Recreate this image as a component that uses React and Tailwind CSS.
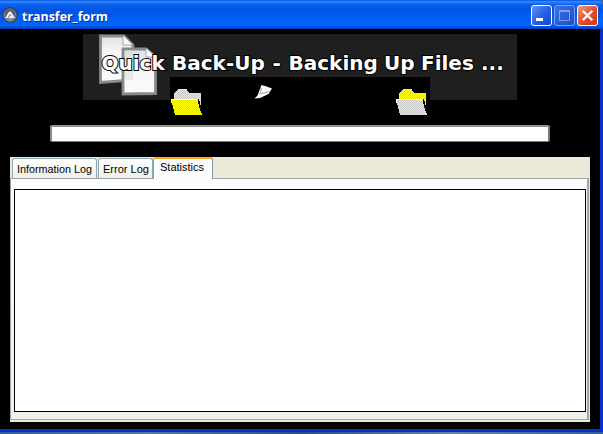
const WINDOW_FONT = "font-['Liberation_Sans',Arial,sans-serif]";

function AppIcon() {
  return (
    <svg width="16" height="16" viewBox="0 0 16 16" className="shrink-0">
      <defs>
        <radialGradient id="disc" cx="50%" cy="65%" r="60%">
          <stop offset="0" stopColor="#a9b6c8" />
          <stop offset="0.55" stopColor="#55688a" />
          <stop offset="1" stopColor="#3c424d" />
        </radialGradient>
      </defs>
      <circle cx="8" cy="8" r="7.4" fill="url(#disc)" stroke="#3a3b40" strokeWidth="1" />
      <circle cx="8" cy="8" r="6" fill="none" stroke="#858b96" strokeWidth="0.9" />
      <path d="M3.2 11 L7 4.8 Q8 3.6 9 4.8 L12.8 11 H6.8 L8.4 9 H9.4 L8 6.8 L5.4 11 Z" fill="#eef2f7" />
    </svg>
  );
}

function TitleButton({ kind }) {
  const fill = {
    min: "bg-linear-to-br from-[#5f92f4] via-[#2a62e6] to-[#1545c8] border-white",
    max: "bg-linear-to-br from-[#3a72e8] to-[#1c4cca] border-[#7f9ff0]",
    close: "bg-linear-to-br from-[#f09a80] via-[#e0512b] to-[#c63a14] border-white",
  }[kind];
  return (
    <div className={`h-[21px] w-[21px] rounded-[3px] border ${fill}`}>
      <svg width="19" height="19" viewBox="0 0 19 19" className="block">
        {kind === "min" && <rect x="4" y="12" width="7" height="3" fill="#fff" />}
        {kind === "max" && (
          <path d="M4.5 5V14.5H14.5V5M4 5.5H15M4 4.5H15" fill="none" stroke="#7e9bec" />
        )}
        {kind === "close" && (
          <path d="M4.7 4.7L14.3 14.3M14.3 4.7L4.7 14.3" stroke="#fff" strokeWidth="2.3" />
        )}
      </svg>
    </div>
  );
}

function Folder() {
  return (
    <svg width="32" height="28" viewBox="0 0 32 28" shapeRendering="crispEdges" className="block">
      <defs>
        <pattern id="dither" width="2" height="2" patternUnits="userSpaceOnUse">
          <rect width="2" height="2" fill="#ffff00" />
          <rect width="1" height="1" fill="#cccccc" />
          <rect x="1" y="1" width="1" height="1" fill="#cccccc" />
        </pattern>
        <pattern id="ditherFront" x="1" width="2" height="2" patternUnits="userSpaceOnUse">
          <rect width="2" height="2" fill="#ffff00" />
          <rect width="1" height="1" fill="#cccccc" />
          <rect x="1" y="1" width="1" height="1" fill="#cccccc" />
        </pattern>
      </defs>
      <path d="M4 10V4L8 0H15L18 4H30V18L28 10Z" fill="url(#dither)" />
      <path d="M3.5 10V4.5L7 1M17 4.5H30" fill="none" stroke="#dcdcd4" />
      <path d="M7 0.5H15L17 3.5" fill="none" stroke="#e6e6de" />
      <path d="M0 10H27L31 26H4L2 18Z" fill="url(#ditherFront)" />
      <path d="M0.5 14V10.5H27" fill="none" stroke="#fff" />
      <path d="M27.5 10V13L30 22" fill="none" stroke="#111" />
    </svg>
  );
}

function FlyingSheet() {
  return (
    <svg width="19" height="16" viewBox="0 0 19 16" className="block">
      <path d="M7.5 1L11 2L18 4.5L14.5 10L6 14L0.5 14.5L3.5 11.5Z" fill="#fff" />
      <path d="M5 9.5L10 9L15 7.5M7.5 4L6.5 8" stroke="#555" strokeWidth="0.6" fill="none" />
    </svg>
  );
}

function Documents() {
  return (
    <svg width="62" height="64" viewBox="0 0 62 64" className="block">
      <defs>
        <linearGradient id="paper" x1="0" y1="0" x2="0" y2="1">
          <stop offset="0" stopColor="#dfe0e1" />
          <stop offset="0.35" stopColor="#f6f6f6" />
          <stop offset="1" stopColor="#fafafa" />
        </linearGradient>
      </defs>
      <path d="M2.5 2H26L35 11V46L2.5 48.5Z" fill="url(#paper)" stroke="#858b8e" strokeWidth="2.8" />
      <path d="M25 1L35 11H25Z" fill="#f7f7f7" stroke="#888e91" strokeWidth="0.7" />
      <path d="M25 15H48L57.5 23V59.5L25 60Z" fill="url(#paper)" stroke="#858b8e" strokeWidth="2.8" />
      <path d="M27 16H35V46H27Z" fill="#d5d8da" opacity="0.5" />
      <path d="M48 14L58 23H48Z" fill="#f9f9f9" stroke="#888e91" strokeWidth="0.7" />
    </svg>
  );
}

function Banner() {
  return (
    <div className="relative ml-[83px] h-[90px] w-[434px]">
      <div className="h-[66px] bg-[#1f1f1f] pl-[15px]">
        <Documents />
      </div>
      <div className="absolute left-[87px] top-[43px] h-[47px] w-[260px] bg-black">
        <div className="absolute left-[1px] top-[12px]"><Folder /></div>
        <div className="absolute left-[84px] top-[7px]"><FlyingSheet /></div>
        <div className="absolute left-[226px] top-[12px]"><Folder /></div>
      </div>
      <svg width="434" height="66" className="absolute left-0 top-0">
        <text y="36"
          className="fill-white stroke-black font-['DejaVu_Sans',Verdana,sans-serif] text-[20px] font-bold [paint-order:stroke] stroke-[2px]">
          <tspan x="18.5">Quick </tspan>
          <tspan x="89">Back-Up </tspan>
          <tspan x="189.5">- </tspan>
          <tspan x="205.5">Backing </tspan>
          <tspan x="301">Up </tspan>
          <tspan x="338">Files </tspan>
          <tspan x="398">...</tspan>
        </text>
      </svg>
    </div>
  );
}

function TabLabel({ children, width }) {
  return (
    <svg width={width} height="14" className="block overflow-visible">
      <text x="0" y="11" textLength={width} lengthAdjust="spacingAndGlyphs"
        className="fill-black font-['Liberation_Sans',Arial,sans-serif] text-[11px]">
        {children}
      </text>
    </svg>
  );
}

export default function App() {
  return (
    <div className={`flex h-[434px] w-[603px] flex-col overflow-hidden bg-[#355f9d] ${WINDOW_FONT}`}>
      <header className="flex h-[29px] shrink-0 items-start rounded-tr-[6px] bg-[linear-gradient(180deg,#0b50dc_0,#2f8cff_6%,#0b62ee_15%,#0054e3_35%,#005cf5_60%,#0066ff_85%,#0049d2_96%,#003bbd_100%)] pl-[2px] pr-[5px]">
        <div className="mt-[7px]"><AppIcon /></div>
        <svg width="100" height="26" className="ml-1 block">
          <text x="1" y="21.5" textLength="86" lengthAdjust="spacingAndGlyphs"
            className="fill-[#0a2a8a] font-['Open_Sans','Noto_Sans',sans-serif] text-[13px] font-bold">transfer_form</text>
          <text x="0" y="20.5" textLength="86" lengthAdjust="spacingAndGlyphs"
            className="fill-white font-['Open_Sans','Noto_Sans',sans-serif] text-[13px] font-bold">transfer_form</text>
        </svg>
        <div className="ml-auto mt-[5px] flex gap-[2px]">
          <TitleButton kind="min" />
          <TitleButton kind="max" />
          <TitleButton kind="close" />
        </div>
      </header>

      <main className="h-[403px] shrink-0 border-b-[3px] border-r-[3px] border-[#0a33c4] bg-black pt-[5px]">
        <Banner />
        <div className="ml-[50px] mt-px h-[17px] w-[500px] rounded-[2px] border-2 border-b border-[#777] border-l-[#8b8b8b] border-t-[#909090] bg-white" />

        <section className="ml-[10px] mt-[15px] flex h-[265px] w-[580px] flex-col bg-[#ece9d8] pb-[2px] pr-[1px]">
          <div className="flex h-[21px] shrink-0 items-end pl-[2px]">
            <div className="mr-px flex h-[20px] w-[85px] rounded-t-[3px] border border-b-0 border-[#91a7b4] bg-linear-to-b from-white to-[#f0f0ea] pl-[4px] pt-[3px]">
              <TabLabel width={75}>Information Log</TabLabel>
            </div>
            <div className="flex h-[20px] w-[55px] rounded-t-[3px] border border-b-0 border-[#91a7b4] bg-linear-to-b from-white to-[#f0f0ea] pl-[4px] pt-[3px]">
              <TabLabel width={46}>Error Log</TabLabel>
            </div>
            <div className="relative z-10 -mb-px flex h-[22px] w-[60px] rounded-t-[3px] border-x border-t-[2px] border-x-[#919b9c] border-t-[#ffa51f] bg-[#fbfcfe] pl-[6px] pt-px">
              <TabLabel width={44}>Statistics</TabLabel>
            </div>
          </div>
          <div className="grow border border-r-2 border-[#a0a5a7] bg-linear-to-b from-[#fcfdfe] to-[#f2f1e9] pb-[7px] pl-[3px] pr-px pt-[10px]">
            <div className="h-full border border-black bg-white" />
          </div>
        </section>
      </main>
      <div className="h-[2px] bg-[linear-gradient(90deg,#315f9b,#52799e,#284f86,#6285a1,#315f9b)]" />
    </div>
  );
}
